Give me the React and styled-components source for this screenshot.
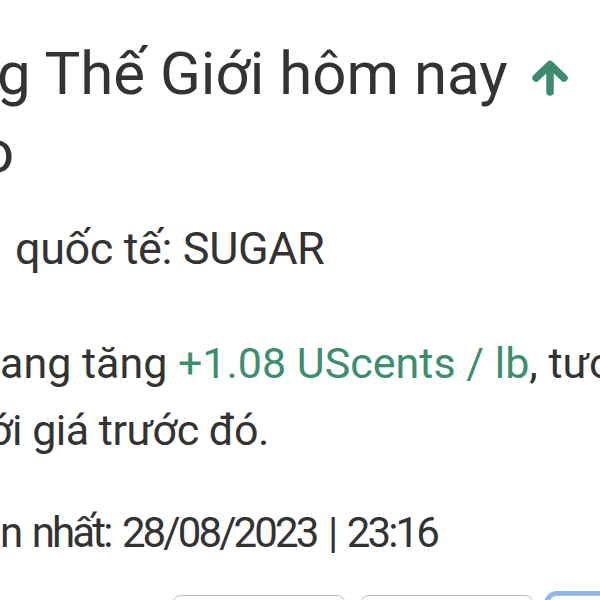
import React from "react";
import styled, { createGlobalStyle } from "styled-components";

const GlobalStyle = createGlobalStyle`
  html, body {
    margin: 0;
    padding: 0;
    background: #ffffff;
  }
  body {
    width: 600px;
    height: 600px;
    overflow: hidden;
    font-family: Roboto, "Noto Sans", sans-serif;
    color: #333333;
  }
`;

const Page = styled.div`
  width: 600px;
  height: 600px;
  overflow: hidden;
  display: flex;
  flex-direction: column;
`;

const Title = styled.h1`
  margin: 35px 0 0 0;
  font-size: 60px;
  line-height: 78px;
  font-weight: 400;
  color: #333333;
`;

const Line = styled.div`
  white-space: nowrap;
  text-indent: ${(p) => p.$indent || 0}px;
  letter-spacing: ${(p) => p.$tight || 0}px;
  display: flex;
  align-items: center;
  gap: 23px;
`;

const Up = styled.svg`
  width: 38px;
  height: 36px;
  flex: none;
  margin-top: 8px;
`;

const Symbol = styled.p`
  margin: 25px 0 0 0;
  font-size: 45px;
  line-height: 66px;
  white-space: nowrap;
  text-indent: 15px;
  letter-spacing: -0.4px;
`;

const Summary = styled.div`
  margin-top: 48px;
  font-size: 43px;
  line-height: 67px;
`;

const Change = styled.span`
  color: #3d8d6f;
`;

const Updated = styled.p`
  margin: 36px 0 0 0;
  font-size: 42px;
  line-height: 66px;
  white-space: nowrap;
  letter-spacing: -2.9px;
  word-spacing: 4px;
`;

const Tabs = styled.div`
  margin-top: 29px;
  display: flex;
  gap: 14px;
  padding-left: 172px;
`;

const Tab = styled.button`
  flex: none;
  width: ${(p) => (p.$active ? 90 : 174)}px;
  height: 40px;
  border: 1.5px solid #bdbdbd;
  border-radius: 9px;
  background: #ffffff;
  box-shadow: ${(p) => (p.$active ? "0 0 0 4px #8ab6f2" : "none")};
`;

function ArrowUp() {
  return (
    <Up viewBox="0 0 38 36">
      <path
        d="M5 18 L19 4.5 L33 18 M19 6 L19 32"
        fill="none"
        stroke="#3b8b6d"
        strokeWidth="7.5"
        strokeLinecap="round"
        strokeLinejoin="round"
      />
    </Up>
  );
}

export default function App() {
  return (
    <Page>
      <GlobalStyle />
      <Title>
        <Line $indent={-3}>
          <span>g Thế Giới hôm nay</span>
          <ArrowUp />
        </Line>
        <Line $indent={-20}>o</Line>
      </Title>
      <Symbol>quốc tế: SUGAR</Symbol>
      <Summary>
        <Line>
          <span>
            ang tăng <Change>+1.08 UScents / lb</Change>, tương đương
          </span>
        </Line>
        <Line $indent={-12} $tight={-0.5}>
          ới giá trước đó.
        </Line>
      </Summary>
      <Updated>n nhất: 28/08/2023 | 23:16</Updated>
      <Tabs>
        <Tab />
        <Tab />
        <Tab $active />
      </Tabs>
    </Page>
  );
}
